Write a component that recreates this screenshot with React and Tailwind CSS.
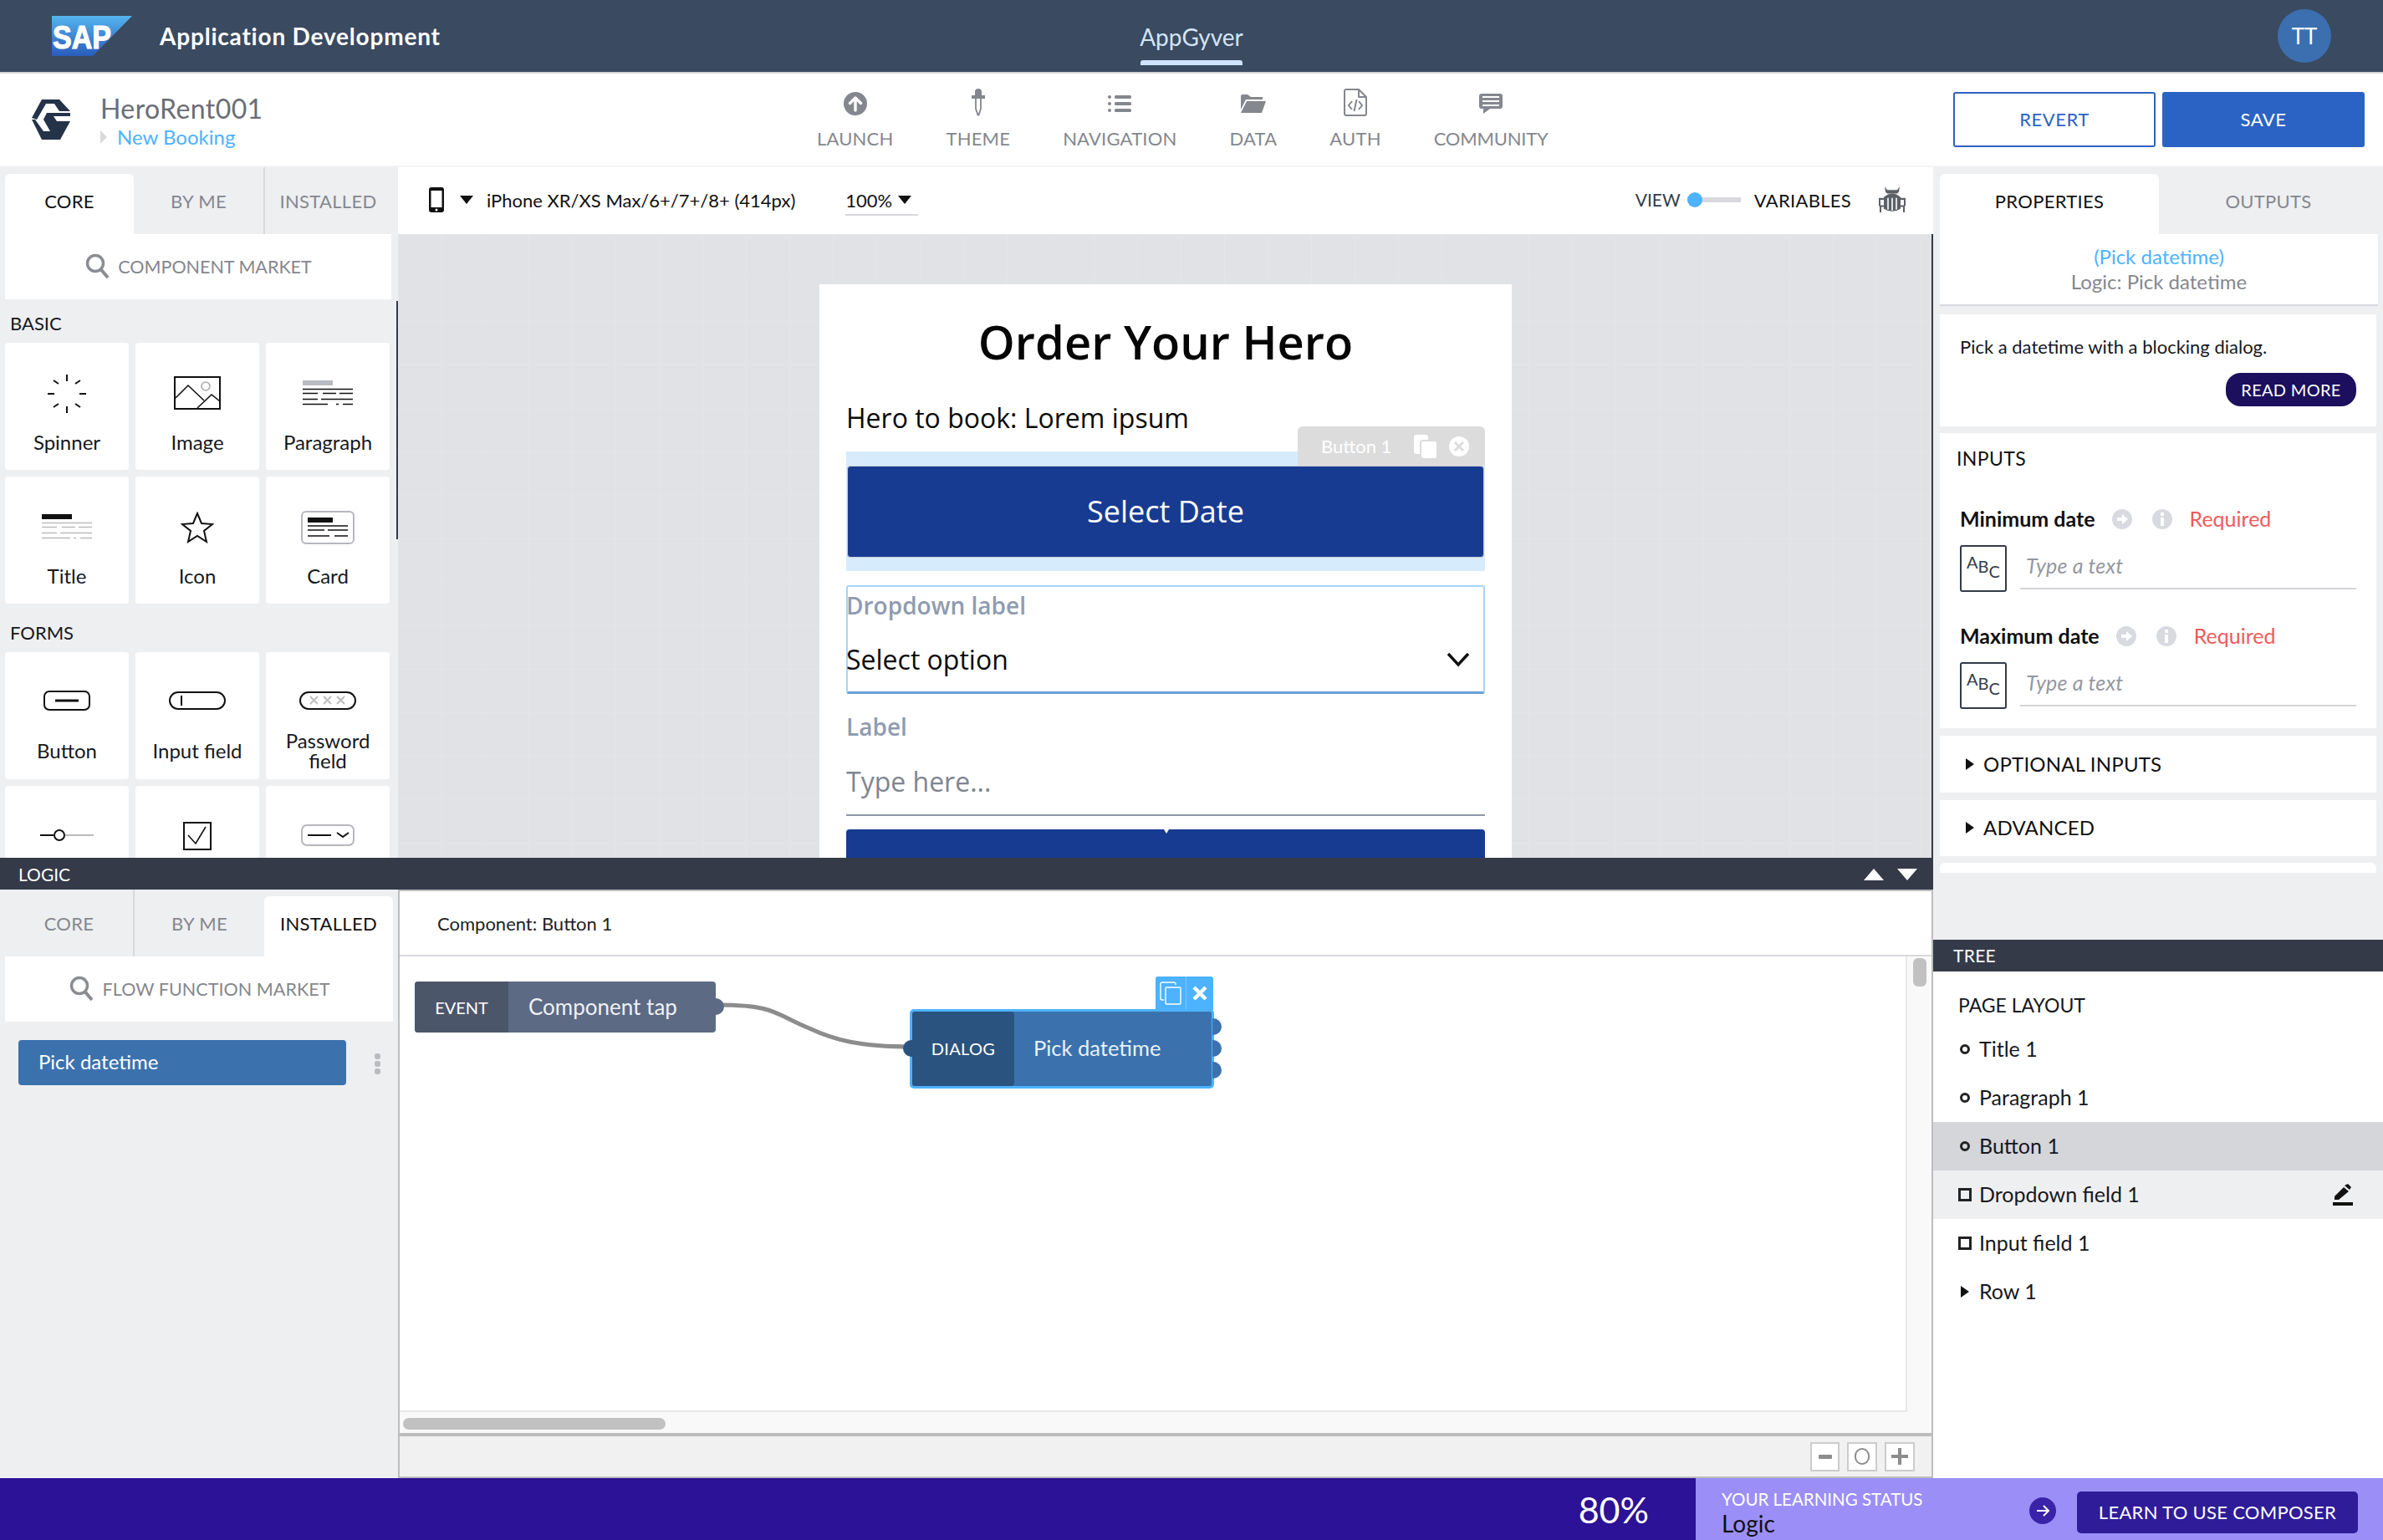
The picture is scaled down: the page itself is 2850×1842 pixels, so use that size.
import React from "react";

const Tri = ({ className = "" }) => (
  <svg width="16" height="18" viewBox="0 0 16 18" className={className}><path d="M3 2 L13 9 L3 16 Z" fill="currentColor" /></svg>
);
const Down = ({ className = "" }) => (
  <svg width="18" height="12" viewBox="0 0 18 12" className={className}><path d="M1 1 H17 L9 11 Z" fill="currentColor" /></svg>
);
const Search = () => (
  <svg width="32" height="32" viewBox="0 0 32 32" fill="none" stroke="#8a8c92" strokeWidth="3.4"><circle cx="13" cy="12" r="9.5" /><path d="M19.5 19 L28 29" strokeWidth="4" /></svg>
);

const icons = {
  Spinner: (
    <svg width="48" height="48" viewBox="0 0 48 48" stroke="#111" strokeWidth="2">
      <path d="M24 1v8M24 39v8M1 24h8M39 24h8M8 8l6 4M40 8l-6 4M8 40l6-4M40 40l-6-4" />
    </svg>
  ),
  Image: (
    <svg width="56" height="40" viewBox="0 0 56 40" fill="none" stroke="#111" strokeWidth="1.6" className="-mt-[2px]">
      <rect x="1" y="1" width="54" height="38" strokeWidth="2" />
      <path d="M2 26 L17 11 L36 29 M28 38 L45 22 L55 30" />
      <circle cx="38" cy="12" r="5" stroke="#aaa" />
    </svg>
  ),
  Paragraph: (
    <svg width="60" height="32" viewBox="0 0 60 32">
      <rect width="36" height="6" fill="#b9bbc1" />
      <path d="M0 10.5h60M0 15.5H18M24 15.5H40M44 15.5h16M0 22.5h18M22 22.5h38M0 28.5H30M40 28.5h3M48 28.5h12" stroke="#111" strokeWidth="1.6" />
    </svg>
  ),
  Title: (
    <svg width="60" height="32" viewBox="0 0 60 32">
      <rect width="36" height="6" fill="#111" />
      <path d="M0 10.5h60M0 15.5H18M24 15.5H40M44 15.5h16M0 22.5h18M22 22.5h38M0 28.5H34M38 28.5h3M46 28.5h14" stroke="#bbb" strokeWidth="1.6" />
    </svg>
  ),
  Icon: (
    <svg width="40" height="38" viewBox="0 0 40 38" fill="none" stroke="#111" strokeWidth="2">
      <path d="M20 2 L25 14 L38 15 L28 23 L31 36 L20 29 L9 36 L12 23 L2 15 L15 14 Z" />
    </svg>
  ),
  Card: (
    <svg width="64" height="40" viewBox="0 0 64 40" fill="none">
      <rect x="1" y="1" width="62" height="38" rx="5" stroke="#b5b7bd" strokeWidth="2" />
      <rect x="8" y="8" width="30" height="6" fill="#111" />
      <path d="M8 18h48M8 23H28M32 23h24M8 30h26M40 30h16" stroke="#111" strokeWidth="1.6" />
    </svg>
  ),
  Button: (
    <svg width="56" height="24" viewBox="0 0 56 24" fill="none" stroke="#111">
      <rect x="1" y="1" width="54" height="22" rx="6" strokeWidth="2" />
      <path d="M14 12h28" strokeWidth="3" />
    </svg>
  ),
  "Input field": (
    <svg width="68" height="22" viewBox="0 0 68 22" fill="none" stroke="#111">
      <rect x="1" y="1" width="66" height="20" rx="10" strokeWidth="2" />
      <path d="M15 5v12" strokeWidth="2" />
    </svg>
  ),
  "Password field": (
    <svg width="68" height="22" viewBox="0 0 68 22" fill="none" stroke="#111">
      <rect x="1" y="1" width="66" height="20" rx="10" strokeWidth="2" />
      <path d="M13 6l9 9M22 6l-9 9M29 6l9 9M38 6l-9 9M45 6l9 9M54 6l-9 9" stroke="#bbb" strokeWidth="1.8" />
    </svg>
  ),
  Slider: (
    <svg width="64" height="16" viewBox="0 0 64 16" fill="none" className="mt-[2px]">
      <path d="M0 8h16" stroke="#111" strokeWidth="2" />
      <path d="M30 8h34" stroke="#bbb" strokeWidth="2" />
      <circle cx="23" cy="8" r="6" stroke="#111" strokeWidth="2" />
    </svg>
  ),
  Check: (
    <svg width="34" height="34" viewBox="0 0 34 34" fill="none" stroke="#111" strokeWidth="2" className="mt-[4px]">
      <rect x="1" y="1" width="32" height="32" />
      <path d="M6 16 L15 26 L27 6" strokeWidth="1.6" />
    </svg>
  ),
  Select: (
    <svg width="64" height="26" viewBox="0 0 64 26" fill="none" className="mt-[2px]">
      <rect x="1" y="1" width="62" height="24" rx="6" stroke="#b5b7bd" strokeWidth="2" />
      <path d="M8 13h28" stroke="#111" strokeWidth="2" />
      <path d="M43 10l7 5 7-5" stroke="#111" strokeWidth="2" />
    </svg>
  ),
};

const Card = ({ name, icon, tall }) => (
  <div className="h-[152px] bg-white rounded-[4px] flex flex-col items-center text-[#16181d] shrink-0">
    <div className={tall ? "h-[101px] pt-[15px] flex items-center justify-center shrink-0" : "h-[102px] pt-[20px] flex items-center justify-center shrink-0"}>{icons[icon || name]}</div>
    {name && <div className="h-[34px] flex items-center justify-center text-center text-[24px] leading-[24px] px-2">{name}</div>}
  </div>
);

const TabHead = ({ children, active, full, className = "" }) => (
  <div className={`flex items-center justify-center text-[22px] tracking-[0.3px] ${full ? "h-[80px] -mt-[8px]" : "h-[72px] pb-[8px]"} ${active ? "bg-white text-[#111] rounded-t-[6px]" : "text-[#85878e]"} ${className}`}>{children}</div>
);

const NavItem = ({ label, tight, children }) => (
  <div className="flex flex-col items-center text-[#85878e]">
    <div className="h-[40px] flex items-center justify-center">{children}</div>
    <div className={tight ? "mt-[9px] text-[22px] leading-[26px] tracking-[-0.2px] whitespace-nowrap" : "mt-[9px] text-[22px] leading-[26px] tracking-[0.2px] whitespace-nowrap"}>{label}</div>
  </div>
);

const InputRow = ({ label }) => (
  <div className="pl-[24px] pr-[24px]">
    <div className="flex items-center h-[30px]">
      <span className="text-[25px] font-bold text-[#111]">{label}</span>
      <svg className="ml-[20px]" width="24" height="24" viewBox="0 0 24 24"><circle cx="12" cy="12" r="12" fill="#d8dadf" /><path d="M6 10h6V6l7 6-7 6v-4H6z" fill="#fff" /></svg>
      <svg className="ml-[24px]" width="24" height="24" viewBox="0 0 24 24"><circle cx="12" cy="12" r="12" fill="#d8dadf" /><rect x="10" y="10" width="4" height="10" fill="#fff" /><rect x="10" y="4" width="4" height="4" fill="#fff" /></svg>
      <span className="ml-[21px] text-[25px] text-[#ef5a5a]">Required</span>
    </div>
    <div className="mt-[16px] flex">
      <div className="w-[56px] h-[56px] border-2 border-[#343a48] rounded-[3px] text-[#343a48] flex items-start justify-center pt-[8px] text-[20px] leading-none shrink-0">
        <span>A</span><span className="mt-[5px]">B</span><span className="mt-[11px]">C</span>
      </div>
      <div className="ml-[16px] flex-1 h-[53px] border-b-2 border-[#d4d5d9] pl-[7px] text-[25px] tracking-[0.2px] italic text-[#96989f] leading-[48px]">Type a text</div>
    </div>
  </div>
);

const TreeRow = ({ marker, label, className = "", children }) => (
  <div className={`h-[58px] flex items-center pl-[30px] pr-[36px] text-[25px] text-[#16181d] ${className}`}>
    <div className="w-[25px] flex items-center shrink-0">{marker}</div>
    <span>{label}</span>
    {children}
  </div>
);
const Dot = () => <span className="ml-[2px] block w-[12px] h-[12px] rounded-full border-[3px] border-[#222]" />;
const Sq = () => <span className="block w-[16px] h-[16px] border-[3px] border-[#222]" />;

export default function App() {
  return (
    <div className="w-[2850px] h-[1842px] flex flex-col overflow-hidden bg-white font-['Lato','Liberation_Sans',sans-serif]">
      {/* top header */}
      <header className="h-[88px] shrink-0 bg-[#3a4a60] border-b-2 border-[#d4d6d6] flex items-center relative">
        <svg className="ml-[62px]" width="96" height="48" viewBox="0 0 96 48">
          <defs>
            <linearGradient id="sapg" x1="0" y1="0" x2="0" y2="1">
              <stop offset="0" stopColor="#54b4ee" />
              <stop offset="1" stopColor="#2a5cbc" />
            </linearGradient>
          </defs>
          <path d="M0 0 H96 L49 48 H0 Z" fill="url(#sapg)" />
          <text x="1" y="39" fill="#fff" stroke="#fff" strokeWidth="1.2" fontFamily="Liberation Sans" fontWeight="700" fontSize="38" textLength="70" lengthAdjust="spacingAndGlyphs">SAP</text>
        </svg>
        <div className="ml-[33px] text-[28px] font-bold text-white tracking-[0.8px]">Application Development</div>
        <div className="absolute left-[1364px] top-0 w-[122px] h-[78px] flex flex-col items-center">
          <div className="h-[72px] flex items-center text-[28px] text-[#d3e4f8] pt-[16px]">AppGyver</div>
          <div className="w-full h-[6px] bg-[#cfe3fb] rounded-t-[3px]" />
        </div>
        <div className="ml-auto mr-[62px] w-[64px] h-[64px] rounded-full bg-[#3b6fb0] text-white flex items-center justify-center text-[26px]">TT</div>
      </header>

      {/* tool bar */}
      <div className="h-[112px] shrink-0 flex items-center bg-white border-b-2 border-[#f2f3f5] relative">
        <svg className="ml-[38px]" width="46" height="48" viewBox="0 0 46 48">
          <path d="M12 0 H33 L46 14 L33 14 L27 5 L17 5 L6 24 L0 22 Z" fill="#243349" />
          <path d="M0 24 L12 48 H34 L46 26 H30 L26 20 H46 V16 H18 L14 24 L22 38 H14 L4 24 Z" fill="#243349" />
        </svg>
        <div className="ml-[36px] flex flex-col">
          <div className="text-[32px] leading-[40px] pt-[2px] text-[#6a6d76] tracking-[0.4px]">HeroRent001</div>
          <div className="flex items-center text-[24px] leading-[28px] text-[#4db2ff]">
            <svg width="8" height="16" viewBox="0 0 8 16"><path d="M0 0 L8 8 L0 16 Z" fill="#d9dadd" /></svg>
            <span className="ml-[12px]">New Booking</span>
          </div>
        </div>
        <div className="absolute left-[977px] top-[16px] flex gap-[63px]">
          <NavItem label="LAUNCH">
            <svg width="28" height="28" viewBox="0 0 28 28"><circle cx="14" cy="14" r="14" fill="#85878e" /><path d="M14 22 V8 M7.5 13.5 L14 7 L20.5 13.5" stroke="#fff" strokeWidth="3.4" strokeLinecap="round" strokeLinejoin="round" fill="none" /></svg>
          </NavItem>
          <NavItem label="THEME">
            <svg width="16" height="33" viewBox="0 0 16 33" className="-mt-[4px]">
              <path d="M4 9 V4 a4 4 0 0 1 8 0 V9 Z" fill="#85878e" />
              <rect y="8" width="16" height="4" fill="#85878e" />
              <path d="M5 12 V24 L7.5 31.5 H8.5 L11 24 V12" fill="none" stroke="#85878e" strokeWidth="1.8" />
            </svg>
          </NavItem>
          <NavItem label="NAVIGATION">
            <svg width="28" height="20" viewBox="0 0 28 20" fill="#85878e">
              <circle cx="2" cy="2" r="2" /><rect x="8" y="0" width="20" height="4" rx="1.5" />
              <circle cx="2" cy="10" r="2" /><rect x="8" y="8" width="20" height="4" rx="1.5" />
              <circle cx="2" cy="18" r="2" /><rect x="8" y="16" width="20" height="4" rx="1.5" />
            </svg>
          </NavItem>
          <NavItem label="DATA">
            <svg width="30" height="22" viewBox="0 0 30 22" fill="#85878e"><path d="M0 2 a2 2 0 0 1 2-2 H8 L12 3 H26 V6 H6 L0 18 Z" /><path d="M7 8 H30 L25 22 H0 Z" /></svg>
          </NavItem>
          <NavItem label="AUTH">
            <svg width="28" height="33" viewBox="0 0 28 33" fill="none" stroke="#85878e" strokeWidth="2" className="-mt-[4px]">
              <path d="M3 1 H18 L27 10 V30 A2 2 0 0 1 25 32 H3 A2 2 0 0 1 1 30 V3 A2 2 0 0 1 3 1 Z M18 1 V10 H27" strokeLinejoin="round" />
              <path d="M10 15 L6 20 L10 25 M18 15 L22 20 L18 25 M15.5 13 L12.5 27" />
            </svg>
          </NavItem>
          <NavItem label="COMMUNITY" tight>
            <svg width="28" height="24" viewBox="0 0 28 24"><path d="M3 0 H25 A3 3 0 0 1 28 3 V15 A3 3 0 0 1 25 18 H13 L5 24 V18 H3 A3 3 0 0 1 0 15 V3 A3 3 0 0 1 3 0 Z" fill="#85878e" /><path d="M4 4h20M4 9h20M4 14h20" stroke="#fff" strokeWidth="2" /></svg>
          </NavItem>
        </div>
        <div className="ml-auto mr-[22px] flex gap-[8px]">
          <div className="w-[242px] h-[66px] border-[2px] border-[#2b63c4] rounded-[3px] flex items-center justify-center text-[#2b63c4] text-[22px] tracking-[0.5px] pb-[2px]">REVERT</div>
          <div className="w-[242px] h-[66px] bg-[#2b63c4] rounded-[3px] flex items-center justify-center text-white text-[22px] tracking-[0.5px] pb-[2px]">SAVE</div>
        </div>
      </div>

      {/* main */}
      <div className="h-[1568px] shrink-0 flex">
        <div className="w-[2312px] shrink-0 flex flex-col">
          {/* editor */}
          <div className="h-[826px] shrink-0 flex">
            {/* component panel */}
            <div className="w-[476px] shrink-0 bg-[#eeeff1] pl-[6px] pt-[8px] overflow-hidden relative">
              <div className="flex">
                <TabHead active className="w-[154px]">CORE</TabHead>
                <TabHead className="w-[155px]">BY ME</TabHead>
                <TabHead full className="w-[161px] border-l-2 border-[#d8d9dd] pr-[8px]">INSTALLED</TabHead>
              </div>
              <div className="w-[462px] h-[78px] bg-white flex items-center justify-center gap-[8px] text-[21.5px] text-[#85878e]">
                <Search />
                <span>COMPONENT MARKET</span>
              </div>
              <div className="mt-[14px] h-[28px] flex items-center pl-[6px] text-[22px] text-[#16181d]">BASIC</div>
              <div className="mt-[10px] w-[460px] grid grid-cols-[148px_148px_148px] gap-x-[8px] gap-y-[8px]">
                <Card name="Spinner" />
                <Card name="Image" />
                <Card name="Paragraph" />
                <Card name="Title" />
                <Card name="Icon" />
                <Card name="Card" />
              </div>
              <div className="mt-[20px] h-[28px] flex items-center pl-[6px] text-[22px] text-[#16181d]">FORMS</div>
              <div className="mt-[10px] w-[460px] grid grid-cols-[148px_148px_148px] gap-x-[8px] gap-y-[8px]">
                <Card name="Button" tall />
                <Card name="Input field" tall />
                <Card name="Password field" tall />
                <Card icon="Slider" tall />
                <Card icon="Check" tall />
                <Card icon="Select" tall />
              </div>
              <div className="absolute right-0 top-[160px] w-[2px] h-[285px] bg-[#343a48]" />
            </div>

            {/* centre */}
            <div className="flex-1 min-w-0 flex flex-col">
              <div className="h-[78px] shrink-0 bg-white flex items-center text-[#111]">
                <svg className="ml-[37px]" width="18" height="30" viewBox="0 0 18 30">
                  <rect width="18" height="30" rx="3" fill="#111" /><rect x="2.5" y="4" width="13" height="20" fill="#fff" /><circle cx="9" cy="27" r="1.5" fill="#fff" />
                </svg>
                <Down className="ml-[18px] text-[#111]" />
                <span className="ml-[15px] text-[22px]">iPhone XR/XS Max/6+/7+/8+ (414px)</span>
                <div className="ml-[60px] w-[87px] h-[38px] pt-[2px] border-b-2 border-[#d8d9de] flex items-center text-[22px]">
                  100%<Down className="ml-[6px]" />
                </div>
                <div className="ml-auto flex items-center mr-[32px]">
                  <span className="text-[21px] text-[#343a48]">VIEW</span>
                  <div className="ml-[8px] w-[64px] h-[6px] bg-[#d8d9de] relative">
                    <div className="absolute left-0 -top-[6px] w-[18px] h-[18px] rounded-full bg-[#4db2ff]" />
                  </div>
                  <span className="ml-[16px] text-[22px] text-[#111] tracking-[0.3px]">VARIABLES</span>
                  <svg className="ml-[32px]" width="34" height="32" viewBox="0 0 34 30" preserveAspectRatio="none">
                    <path d="M8 0 L11 4 H23 L26 0 L25 6 L23 8 H11 L9 6 Z" fill="#5d6067" />
                    <path d="M7 12 Q17 4 27 12 V25 Q17 31 7 25 Z" fill="#5d6067" />
                    <path d="M12 13 V26 M17 13 V27 M22 13 V26" stroke="#fff" strokeWidth="1.6" />
                    <path d="M7 14 H2 V22 M27 14 H32 V22 M7 22 H3 V29 M27 22 H31 V29" stroke="#5d6067" strokeWidth="2" fill="none" />
                  </svg>
                </div>
              </div>
              <div className="flex-1 min-h-0 mt-[2px] bg-[#e0e2e6] bg-[linear-gradient(#e3e5e8_1px,transparent_1px),linear-gradient(90deg,#e3e5e8_1px,transparent_1px)] bg-[size:52px_52px] border-r-2 border-[#343a48] overflow-hidden flex justify-center">
                {/* phone */}
                <div className="w-[828px] ml-[2px] mt-[60px] h-[800px] shrink-0 bg-white font-['Open_Sans',sans-serif] px-[32px] relative">
                  <div className="mt-[32px] h-[72px] flex items-center justify-center text-[56px] leading-none font-semibold text-[#050505]">Order Your Hero</div>
                  <div className="mt-[34px] h-[44px] flex items-center text-[32px] text-[#0a0a0a]">Hero to book: Lorem ipsum</div>
                  <div className="mt-[18px] h-[143px] bg-[#d6ecfd] px-[1px] pt-[17px] relative">
                    <div className="h-[110px] bg-[#183b92] rounded-[4px] border border-[#c9ccd2] flex items-center justify-center text-[36px] text-white">Select Date</div>
                    <div className="absolute right-0 -top-[30px] w-[224px] h-[47px] bg-[#dcdcdc] rounded-t-[6px] flex items-center font-['Lato',sans-serif] text-white text-[22px] pl-[28px]">
                      <span>Button 1</span>
                      <svg className="ml-[26px]" width="30" height="30" viewBox="0 0 30 30" fill="#fff"><rect x="1" y="1" width="17" height="23" rx="3" /><rect x="9" y="8" width="20" height="22" rx="3" stroke="#dcdcdc" strokeWidth="2" /></svg>
                      <svg className="ml-[12px]" width="26" height="26" viewBox="0 0 26 26"><circle cx="13" cy="13" r="12" fill="#fff" /><path d="M8 8l10 10M18 8L8 18" stroke="#dcdcdc" strokeWidth="3" /></svg>
                    </div>
                  </div>
                  <div className="mt-[17px] h-[130px] border-2 border-[#a7d4f7] border-b-[3px] border-b-[#6ba0d6] rounded-[3px] relative">
                    <div className="-ml-[2px] h-[44px] flex items-center text-[28px] font-semibold text-[#8f9bb0]">Dropdown label</div>
                    <div className="-ml-[2px] mt-[21px] h-[44px] flex items-center justify-between text-[32px] text-[#0a0a0a] pr-[16px]">
                      <span>Select option</span>
                      <svg width="28" height="18" viewBox="0 0 28 18" fill="none" stroke="#111" strokeWidth="3.4"><path d="M2 2 L14 15 L26 2" /></svg>
                    </div>
                  </div>
                  <div className="mt-[21px] h-[36px] flex items-center text-[28px] font-semibold text-[#8f9bb0]">Label</div>
                  <div className="mt-[26px] h-[44px] flex items-center text-[32px] text-[#7f8590]">Type here...</div>
                  <div className="mt-[17px] h-[2px] bg-[#8e97a8]" />
                  <div className="mt-[16px] h-[60px] bg-[#183b92] rounded-t-[4px] relative">
                    <div className="absolute left-[380px] top-0 w-0 h-0 border-x-[3px] border-x-transparent border-t-[5px] border-t-white" />
                  </div>
                </div>
              </div>
            </div>
          </div>

          {/* logic */}
          <div className="h-[742px] shrink-0 flex flex-col">
            <div className="h-[38px] shrink-0 bg-[#343a48] flex items-center justify-between pl-[22px] pr-[19px] pt-[2px] text-[21px] text-white">
              <span>LOGIC</span>
              <div className="flex gap-[16px]">
                <svg width="24" height="14" viewBox="0 0 24 14"><path d="M12 0 L24 14 H0 Z" fill="#fff" /></svg>
                <svg width="24" height="14" viewBox="0 0 24 14"><path d="M0 0 H24 L12 14 Z" fill="#fff" /></svg>
              </div>
            </div>
            <div className="flex-1 min-h-0 flex">
              <div className="w-[476px] shrink-0 bg-[#eeeff1] pl-[6px] pt-[8px]">
                <div className="flex">
                  <TabHead full className="w-[155px] border-r-2 border-[#d8d9dd]">CORE</TabHead>
                  <TabHead className="w-[155px]">BY ME</TabHead>
                  <TabHead active className="w-[154px]">INSTALLED</TabHead>
                </div>
                <div className="w-[464px] h-[78px] bg-white flex items-center justify-center gap-[9px] text-[21.5px] tracking-[0.05px] text-[#85878e]">
                  <Search />
                  <span>FLOW FUNCTION MARKET</span>
                </div>
                <div className="mt-[22px] flex items-center">
                  <div className="ml-[16px] w-[392px] h-[54px] rounded-[4px] bg-[#3b72ae] text-white text-[24px] flex items-center pl-[24px] pb-[2px]">Pick datetime</div>
                  <div className="ml-[34px] flex flex-col gap-[2px] mt-[2px]">
                    <span className="block w-[7px] h-[7px] rounded-[3px] bg-[#b9bbc0]" />
                    <span className="block w-[7px] h-[7px] rounded-[3px] bg-[#b9bbc0]" />
                    <span className="block w-[7px] h-[7px] rounded-[3px] bg-[#b9bbc0]" />
                  </div>
                </div>
              </div>
              <div className="flex-1 min-w-0 flex flex-col border-l-2 border-r-2 border-[#bdbdbd] border-t-2 border-t-[#bdbdbd] bg-white">
                <div className="h-[78px] shrink-0 border-b-2 border-[#d8d9de] flex items-center pl-[45px] text-[22px] text-[#222]">Component: Button 1</div>
                <div className="h-[574px] shrink-0 bg-[#f9f9f9] relative overflow-hidden border-b-4 border-[#bdbdbd]">
                  <div className="absolute left-0 top-0 w-[1803px] h-[545px] bg-white border-r-2 border-b-2 border-[#e8e8e8]" />
                  <div className="absolute left-[4px] top-[552px] w-[314px] h-[14px] rounded-full bg-[#c1c1c1]" />
                  <div className="absolute left-[1810px] top-[2px] w-[16px] h-[34px] rounded-[6px] bg-[#c1c1c1]" />
                  {/* wire */}
                  <svg className="absolute left-[380px] top-[50px]" width="234" height="64" viewBox="0 0 234 64" fill="none">
                    <path d="M2 8 C 70 8 70 20 110 36 C 140 50 170 58 232 58" stroke="#8c8c8c" strokeWidth="5" />
                  </svg>
                  {/* event node */}
                  <div className="absolute left-[18px] top-[30px] flex items-stretch">
                    <div className="w-[360px] h-[61px] rounded-[4px] bg-[#5c6a84] flex items-center overflow-hidden text-white">
                      <div className="w-[112px] h-full bg-[#4c566b] flex items-center justify-center text-[20px]">EVENT</div>
                      <div className="ml-[24px] text-[26px] text-[#eef1f6]">Component tap</div>
                    </div>
                    <div className="w-[10px] h-[20px] mt-[20px] rounded-r-full bg-[#5c6a84]" />
                  </div>
                  {/* dialog node */}
                  <div className="absolute left-[600px] top-[24px] w-[382px]">
                    <div className="ml-[304px] w-[69px] h-[40px] rounded-t-[3px] bg-[#4db2ff] flex items-center divide-x divide-[#7fc7ff]">
                      <div className="w-[37px] h-full flex items-center justify-center">
                        <svg width="26" height="28" viewBox="0 0 26 28" fill="none" stroke="#fff" strokeWidth="1.4"><path d="M19 4 V3 A2 2 0 0 0 17 1 H3 A2 2 0 0 0 1 3 V20 A2 2 0 0 0 3 22 H5" /><rect x="7" y="7" width="18" height="20" rx="1" /></svg>
                      </div>
                      <div className="flex-1 h-full flex items-center justify-center">
                        <svg width="18" height="18" viewBox="0 0 18 18"><path d="M2 2 L16 16 M16 2 L2 16" stroke="#fff" strokeWidth="4.4" /></svg>
                      </div>
                    </div>
                    <div className="w-[364px] ml-[10px] -mt-[1px] relative">
                      <div className="h-[95px] rounded-[5px] bg-[#3b72ae] border-[3px] border-[#4db2ff] flex items-center overflow-hidden text-white">
                        <div className="w-[122px] h-full bg-[#2a537f] rounded-[4px] flex items-center justify-center pb-[2px] text-[20px] tracking-[0.3px]">DIALOG</div>
                        <div className="ml-[23px] pb-[2px] text-[25.5px] text-[#e9f1fa]">Pick datetime</div>
                      </div>
                      <div className="absolute -left-[8px] top-[37px] w-[11px] h-[20px] rounded-l-full bg-[#2a537f]" />
                      <div className="absolute -right-[9px] top-[11px] w-[11px] h-[20px] rounded-r-full bg-[#3b72ae]" />
                      <div className="absolute -right-[9px] top-[37px] w-[11px] h-[20px] rounded-r-full bg-[#3b72ae]" />
                      <div className="absolute -right-[9px] top-[63px] w-[11px] h-[20px] rounded-r-full bg-[#3b72ae]" />
                    </div>
                  </div>
                </div>
                <div className="flex-1 min-h-0 bg-[#f1f1f1] border-b-2 border-[#bdbdbd] flex items-center justify-end pr-[20px] gap-[9px]">
                  <div className="w-[35px] h-[35px] bg-white border-2 border-[#ccc] flex items-center justify-center"><span className="block w-[16px] h-[5px] rounded-[1px] bg-[#8c8c8c]" /></div>
                  <div className="w-[36px] h-[35px] bg-white border-2 border-[#ccc] flex items-center justify-center"><span className="block w-[18px] h-[20px] rounded-full border-2 border-[#8c8c8c]" /></div>
                  <div className="w-[36px] h-[35px] bg-white border-2 border-[#ccc] flex items-center justify-center">
                    <svg width="20" height="20" viewBox="0 0 20 20"><path d="M8 0h4v8h8v4h-8v8H8v-8H0V8h8z" fill="#8c8c8c" /></svg>
                  </div>
                </div>
              </div>
            </div>
          </div>
        </div>

        {/* right column */}
        <div className="flex-1 min-w-0 flex flex-col">
          <div className="h-[924px] shrink-0 bg-[#eeeff1] pl-[8px] pr-[6px] pt-[8px] overflow-hidden">
            <div className="flex">
              <TabHead active className="w-[262px]">PROPERTIES</TabHead>
              <TabHead className="w-[262px]">OUTPUTS</TabHead>
            </div>
            <div className="h-[86px] w-[524px] bg-white border-b-2 border-[#d8d9de] flex flex-col items-center justify-center text-[24px] leading-[30px]">
              <div className="text-[#4db2ff]">(Pick datetime)</div>
              <div className="text-[#85878e]">Logic: Pick datetime</div>
            </div>
            <div className="mt-[10px] w-[522px] h-[134px] bg-white pl-[24px] pr-[24px] pt-[24px]">
              <div className="text-[22px] leading-[30px] text-[#16181d]">Pick a datetime with a blocking dialog.</div>
              <div className="mt-[16px] flex justify-end">
                <div className="w-[156px] h-[40px] rounded-[18px] bg-[#1b0f5e] text-white text-[20px] tracking-[0.3px] flex items-center justify-center">READ MORE</div>
              </div>
            </div>
            <div className="mt-[8px] w-[522px] h-[353px] bg-white pt-[16px]">
              <div className="pl-[20px] text-[23px] leading-[28px] text-[#111] tracking-[0.4px]">INPUTS</div>
              <div className="mt-[44px]"><InputRow label="Minimum date" /></div>
              <div className="mt-[38px]"><InputRow label="Maximum date" /></div>
            </div>
            <div className="mt-[9px] w-[522px] h-[68px] bg-white flex items-center pl-[28px] text-[24px] text-[#111] tracking-[0.2px]"><Tri className="mr-[8px]" />OPTIONAL INPUTS</div>
            <div className="mt-[9px] w-[522px] h-[67px] bg-white flex items-center pl-[28px] pb-[2px] text-[24px] text-[#111] tracking-[0.2px]"><Tri className="mr-[8px]" />ADVANCED</div>
            <div className="mt-[8px] w-[522px] h-[12px] bg-white rounded-t-[6px]" />
            <div className="h-[80px]" />
          </div>
          <div className="h-[38px] shrink-0 bg-[#343a48] flex items-center pl-[24px] text-[21px] text-white tracking-[0.3px]">TREE</div>
          <div className="flex-1 min-h-0 bg-white">
            <div className="mt-[24px] h-[32px] flex items-center pl-[30px] text-[23px] text-[#16181d]">PAGE LAYOUT</div>
            <div className="mt-[8px]">
              <TreeRow marker={<Dot />} label="Title 1" />
              <TreeRow marker={<Dot />} label="Paragraph 1" />
              <TreeRow marker={<Dot />} label="Button 1" className="bg-[#d5d6da]" />
              <TreeRow marker={<Sq />} label="Dropdown field 1" className="bg-[#eeeff1]">
                <svg className="ml-auto" width="24" height="26" viewBox="0 0 24 26"><path d="M14 2 L18 0 L22 4 L20 7 Z M13 4 L19 9 L7 19 L2 19 L2 15 Z" fill="#111" /><rect y="22" width="24" height="4" fill="#111" /></svg>
              </TreeRow>
              <TreeRow marker={<Sq />} label="Input field 1" />
              <TreeRow marker={<Tri className="text-[#111]" />} label="Row 1" />
            </div>
          </div>
        </div>
      </div>

      {/* learning bar */}
      <div className="h-[74px] shrink-0 flex">
        <div className="w-[2028px] shrink-0 bg-[#2c1296] flex items-center justify-end pr-[56px] pt-[2px] text-[43px] text-white">80%</div>
        <div className="flex-1 bg-[#9b8ff7] flex items-center pl-[31px] pr-[30px]">
          <div className="flex flex-col mt-[6px]">
            <div className="text-[20.5px] leading-[28px] text-white">YOUR LEARNING STATUS</div>
            <div className="text-[28px] leading-[30px] text-[#111]">Logic</div>
          </div>
          <div className="ml-auto mt-[3px] w-[32px] h-[32px] rounded-full bg-[#3a23a8] flex items-center justify-center">
            <svg width="18" height="18" viewBox="0 0 18 18" fill="none" stroke="#fff" strokeWidth="2"><path d="M2 9h14M10 3l6 6-6 6" /></svg>
          </div>
          <div className="ml-[25px] mt-[8px] w-[336px] h-[50px] rounded-[5px] bg-[#2f1c98] text-white text-[22px] tracking-[0.3px] flex items-center justify-center pb-[2px]">LEARN TO USE COMPOSER</div>
        </div>
      </div>
    </div>
  );
}
